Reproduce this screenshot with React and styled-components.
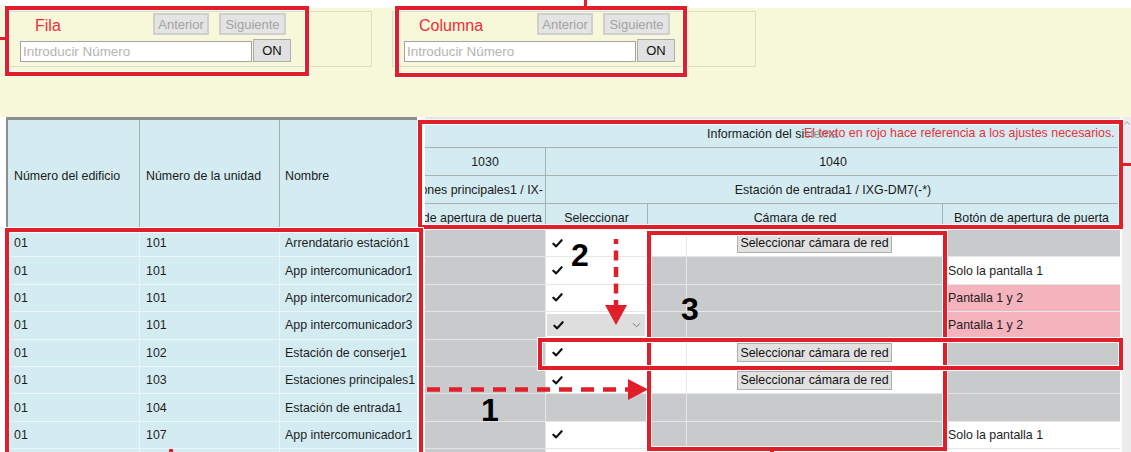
import React from "react";
import styled, { createGlobalStyle } from "styled-components";

const RED = "#e01f2b";
const YELLOW = "#f7f7da";
const BLUE = "#d4ecf1";
const GREY = "#c9cacc";
const PINK = "#f5b3be";

const GlobalStyle = createGlobalStyle`
  html, body { margin: 0; padding: 0; background: #fff; }
  body {
    font-family: "Liberation Sans", Arial, sans-serif;
    font-size: 12.4px;
    color: #1e1e1e;
  }
`;

const Page = styled.div`
  position: relative;
  width: 1131px;
  height: 452px;
  overflow: hidden;
  background: #fff;
`;

/* ---------- top search bar ---------- */
const TopBar = styled.div`
  margin-top: 8px;
  height: 109px;
  box-sizing: border-box;
  background: ${YELLOW};
  display: flex;
  align-items: flex-start;
  gap: 20px;
  padding: 3px 0 0 8px;
`;

const Panel = styled.div`
  width: 364px;
  height: 56px;
  box-sizing: border-box;
  border: 1px solid #dedcc6;
  display: flex;
  flex-direction: column;
  gap: 4px;
  padding: 1px 0 0 11px;
`;

const PanelRow = styled.div`
  display: flex;
  align-items: ${(p) => (p.$bottom ? "flex-end" : "center")};
  gap: ${(p) => p.$gap || 0}px;
`;

const PanelTitle = styled.span`
  width: 108px;
  height: 22px;
  padding-left: 15px;
  color: #ee2d37;
  font-size: 16px;
  line-height: 26px;
`;

const NavButton = styled.button`
  height: 22px;
  width: ${(p) => p.$w}px;
  box-sizing: border-box;
  border: 2px solid #cfcfcf;
  background: #e4e4e4;
  color: #a3a3a3;
  font-family: "Liberation Sans", Arial, sans-serif;
  font-size: 13px;
  padding: 0;
`;

const NumberInput = styled.input`
  width: 232px;
  height: 21px;
  box-sizing: border-box;
  border: 1px solid #a3a3a3;
  background: #fff;
  padding: 0 2px;
  font-family: "Liberation Sans", Arial, sans-serif;
  font-size: 13.4px;
  outline: none;
  &::placeholder { color: #b4b4b4; }
`;

const OnButton = styled.button`
  width: 38px;
  height: 23px;
  margin-left: 1px;
  box-sizing: border-box;
  border: 1px solid #adadad;
  background: #e1e1e1;
  color: #111;
  font-family: "Liberation Sans", Arial, sans-serif;
  font-size: 13px;
  padding: 0;
`;

/* ---------- table ---------- */
const Table = styled.div`
  display: flex;
  height: 335px;
`;

const FrozenPane = styled.div`
  flex: none;
  margin-left: 6px;
  width: 409px;
  border-left: 2px solid #8d8d8d;
  border-top: 3px solid #8d8d8d;
`;

const PaneGap = styled.div`
  flex: none;
  width: 8px;
`;

const ScrollPane = styled.div`
  flex: none;
  width: 695px;
  border-top: 3px solid #ebe4e5;
`;

const ScrollBar = styled.div`
  flex: none;
  margin-left: 2px;
  width: 9px;
  background: #ececec;
  display: flex;
  justify-content: center;
  padding-top: 4px;
  box-sizing: border-box;
`;

const FrozenHeader = styled.div`
  display: grid;
  grid-template-columns: 131px 139px 137px;
  column-gap: 1px;
  height: 108px;
  background: #a9a9a9;
`;

const SysHeader = styled.div`
  display: grid;
  grid-template-columns: 120px 101px 38px 255px 177px;
  grid-template-rows: 27px 27px 27px 24px;
  gap: 1px;
  height: 108px;
  background: #a9b1b3;
`;

const HeadCell = styled.div`
  grid-column: ${(p) => p.$span || "auto"};
  background: ${BLUE};
  display: flex;
  align-items: center;
  justify-content: ${(p) =>
    p.$align === "end" ? "flex-end" : p.$align === "start" ? "flex-start" : "center"};
  padding: ${(p) => (p.$low ? 3 : 0)}px ${(p) => p.$padR || 0}px 0 ${(p) => p.$padL || 0}px;
  white-space: nowrap;
  overflow: hidden;
  color: #1a1a1a;
`;

const FrozenBody = styled.div`
  margin-top: 2px;
  display: grid;
  grid-template-columns: 131px 139px 137px;
  grid-auto-rows: 26.4px;
  gap: 1px;
  background: #eaf5f7;
`;

const ScrollBody = styled.div`
  margin-top: 2px;
  display: grid;
  grid-template-columns: 120px 101px 38px 255px 177px;
  grid-auto-rows: 26.4px;
  gap: 1px;
  background: #e6e6e6;
`;

const TONES = { blue: BLUE, grey: GREY, white: "#fff", pink: PINK };

const Cell = styled.div`
  background: ${(p) => TONES[p.$tone] || "#fff"};
  display: flex;
  align-items: center;
  justify-content: ${(p) => (p.$center ? "center" : "flex-start")};
  padding-left: ${(p) => p.$pad || 0}px;
  white-space: nowrap;
  overflow: hidden;
  color: #1e1e1e;
`;

const CameraButton = styled.button`
  width: 155px;
  height: 19px;
  box-sizing: border-box;
  border: 1px solid #adadad;
  background: #e1e1e1;
  color: #111;
  font-family: "Liberation Sans", Arial, sans-serif;
  font-size: 12.4px;
  padding: 0;
`;

const DropBox = styled.div`
  flex: 1;
  height: 22px;
  margin: 0 2px 0 1px;
  background: #dedede;
  display: flex;
  align-items: center;
  justify-content: space-between;
  padding: 0 4px 0 6px;
`;

const CheckSvg = styled.svg`
  display: block;
`;

const Check = () => (
  <CheckSvg viewBox="0 0 12 10" width="11" height="9">
    <path
      d="M1.4 5.3 L4.5 8.2 L10.6 1.4"
      fill="none"
      stroke="#111"
      strokeWidth="2.4"
      strokeLinecap="round"
      strokeLinejoin="round"
    />
  </CheckSvg>
);

const Chevron = () => (
  <svg viewBox="0 0 10 6" width="9" height="6">
    <path d="M1 1 L5 5 L9 1" fill="none" stroke="#777" strokeWidth="1.1" />
  </svg>
);

/* ---------- annotations (overlay) ---------- */
const RedBox = styled.div`
  position: absolute;
  left: ${(p) => p.$x}px;
  top: ${(p) => p.$y}px;
  width: ${(p) => p.$w}px;
  height: ${(p) => p.$h}px;
  box-sizing: border-box;
  border: 4px solid ${RED};
  box-shadow: 0 0 0 1px #fff, inset 0 0 0 1px #fff;
  pointer-events: none;
`;

const RedBar = styled.div`
  position: absolute;
  left: ${(p) => p.$x}px;
  top: ${(p) => p.$y}px;
  width: ${(p) => p.$w}px;
  height: ${(p) => p.$h}px;
  background: ${RED};
`;

const Callout = styled.span`
  position: absolute;
  left: ${(p) => p.$x}px;
  top: ${(p) => p.$y}px;
  font-family: "Liberation Sans", Arial, sans-serif;
  font-weight: bold;
  font-size: 32px;
  line-height: 32px;
  color: #000;
`;

const Note = styled.span`
  position: absolute;
  left: 804px;
  top: 126px;
  font-size: 12.4px;
  line-height: 14px;
  color: #e8303b;
  background: rgba(212, 236, 241, 0.6);
`;

const Arrow = styled.svg`
  position: absolute;
  left: ${(p) => p.$x}px;
  top: ${(p) => p.$y}px;
  overflow: visible;
`;

/* ---------- data ---------- */
const rows = [
  { b: "01", u: "101", n: "Arrendatario estación1", sel: "check", cam: "button", btn: ["grey", ""] },
  { b: "01", u: "101", n: "App intercomunicador1", sel: "check", cam: "grey", btn: ["white", "Solo la pantalla 1"] },
  { b: "01", u: "101", n: "App intercomunicador2", sel: "check", cam: "grey", btn: ["pink", "Pantalla 1 y 2"] },
  { b: "01", u: "101", n: "App intercomunicador3", sel: "drop", cam: "grey", btn: ["pink", "Pantalla 1 y 2"] },
  { b: "01", u: "102", n: "Estación de conserje1", sel: "check", cam: "button", btn: ["grey", ""] },
  { b: "01", u: "103", n: "Estaciones principales1", sel: "check", cam: "button", btn: ["grey", ""] },
  { b: "01", u: "104", n: "Estación de entrada1", sel: "grey", cam: "grey", btn: ["grey", ""] },
  { b: "01", u: "107", n: "App intercomunicador1", sel: "check", cam: "grey", btn: ["white", "Solo la pantalla 1"] },
  { b: "", u: "", n: "", sel: "blank", cam: "grey", btn: ["white", ""] },
];

const SearchPanel = ({ title }) => (
  <Panel>
    <PanelRow $gap={10}>
      <PanelTitle>{title}</PanelTitle>
      <NavButton $w={56}>Anterior</NavButton>
      <NavButton $w={67}>Siguiente</NavButton>
    </PanelRow>
    <PanelRow $bottom>
      <NumberInput placeholder="Introducir Número" />
      <OnButton>ON</OnButton>
    </PanelRow>
  </Panel>
);

const SelectCell = ({ kind }) => {
  if (kind === "grey") return <Cell $tone="grey" />;
  if (kind === "blank") return <Cell $tone="white" />;
  if (kind === "drop")
    return (
      <Cell $tone="white">
        <DropBox>
          <Check />
          <Chevron />
        </DropBox>
      </Cell>
    );
  return (
    <Cell $tone="white" $pad={6}>
      <Check />
    </Cell>
  );
};

const CameraCells = ({ kind }) =>
  kind === "button" ? (
    <>
      <Cell $tone="white" />
      <Cell $tone="white" $center>
        <CameraButton>Seleccionar cámara de red</CameraButton>
      </Cell>
    </>
  ) : (
    <>
      <Cell $tone="grey" />
      <Cell $tone="grey" />
    </>
  );

export default function App() {
  return (
    <Page>
      <GlobalStyle />
      <TopBar>
        <SearchPanel title="Fila" />
        <SearchPanel title="Columna" />
      </TopBar>

      <Table>
        <FrozenPane>
          <FrozenHeader>
            <HeadCell $align="start" $padL={6} $low>Número del edificio</HeadCell>
            <HeadCell $align="start" $padL={6} $low>Número de la unidad</HeadCell>
            <HeadCell $align="start" $padL={5} $low>Nombre</HeadCell>
          </FrozenHeader>
          <FrozenBody>
            {rows.map((r, i) => (
              <React.Fragment key={i}>
                <Cell $tone="blue" $pad={6}>{r.b}</Cell>
                <Cell $tone="blue" $pad={6}>{r.u}</Cell>
                <Cell $tone="blue" $pad={5}>{r.n}</Cell>
              </React.Fragment>
            ))}
          </FrozenBody>
        </FrozenPane>

        <PaneGap />

        <ScrollPane>
          <SysHeader>
            <HeadCell $span="1 / -1">Información del sistema</HeadCell>
            <HeadCell>1030</HeadCell>
            <HeadCell $span="2 / -1">1040</HeadCell>
            <HeadCell $align="end" $padR={2}>Estaciones principales1 / IX-</HeadCell>
            <HeadCell $span="2 / -1">Estación de entrada1 / IXG-DM7(-*)</HeadCell>
            <HeadCell $align="end" $padR={3} $low>Botón de apertura de puerta</HeadCell>
            <HeadCell $low>Seleccionar</HeadCell>
            <HeadCell $span="3 / 5" $low>Cámara de red</HeadCell>
            <HeadCell $low>Botón de apertura de puerta</HeadCell>
          </SysHeader>
          <ScrollBody>
            {rows.map((r, i) => (
              <React.Fragment key={i}>
                <Cell $tone="grey" />
                <SelectCell kind={r.sel} />
                <CameraCells kind={r.cam} />
                <Cell $tone={r.btn[0]} $pad={5}>{r.btn[1]}</Cell>
              </React.Fragment>
            ))}
          </ScrollBody>
        </ScrollPane>

        <ScrollBar>
          <svg viewBox="0 0 6 4" width="6" height="4">
            <path d="M0.5 3.5 L3 0.8 L5.5 3.5" fill="none" stroke="#9a9a9a" strokeWidth="1" />
          </svg>
        </ScrollBar>
      </Table>

      {/* annotations */}
      <Note>El texto en rojo hace referencia a los ajustes necesarios.</Note>

      <RedBox $x={5} $y={6} $w={304} $h={70} />
      <RedBar $x={0} $y={37} $w={5} $h={3} />
      <RedBox $x={395} $y={6} $w={292} $h={71} />
      <RedBar $x={584} $y={0} $w={3} $h={6} />

      <RedBox $x={418} $y={120} $w={705} $h={109} />
      <RedBar $x={1123} $y={163} $w={8} $h={3} />

      <RedBox $x={5} $y={228} $w={418} $h={240} />
      <RedBar $x={169} $y={449} $w={4} $h={3} />

      <RedBox $x={647} $y={231} $w={300} $h={220} />
      <RedBar $x={770} $y={450} $w={4} $h={2} />

      <RedBox $x={538} $y={338} $w={585} $h={32} />

      <Arrow $x={604} $y={238} width="24" height="88" viewBox="0 0 24 88">
        <line x1="12" y1="1" x2="12" y2="67" stroke={RED} strokeWidth="4.5" strokeDasharray="10 6.5" strokeDashoffset="5" />
        <polygon points="1,67 23,67 12,87" fill={RED} />
      </Arrow>

      <Arrow $x={427} $y={379} width="222" height="22" viewBox="0 0 222 22">
        <line x1="0" y1="10.5" x2="202" y2="10.5" stroke={RED} strokeWidth="4.5" strokeDasharray="13 9" />
        <polygon points="201,0 201,21 221,10.5" fill={RED} />
      </Arrow>

      <Callout $x={571} $y={239}>2</Callout>
      <Callout $x={681} $y={293}>3</Callout>
      <Callout $x={481} $y={394}>1</Callout>
    </Page>
  );
}
